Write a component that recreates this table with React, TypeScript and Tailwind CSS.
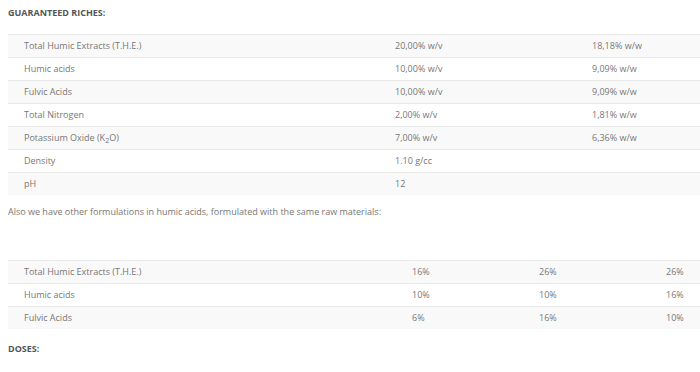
import React from 'react';

// Guaranteed analysis rows
const riches = [
  ['Total Humic Extracts (T.H.E.)', '20,00% w/v', '18,18% w/w'],
  ['Humic acids', '10,00% w/v', '9,09% w/w'],
  ['Fulvic Acids', '10,00% w/v', '9,09% w/w'],
  ['Total Nitrogen', '2,00% w/v', '1,81% w/w'],
  ['K2O', '7,00% w/v', '6,36% w/w'],
  ['Density', '1.10 g/cc', ''],
  ['pH', '12', ''],
];

const formulations = [
  ['Total Humic Extracts (T.H.E.)', '16%', '26%', '26%'],
  ['Humic acids', '10%', '10%', '16%'],
  ['Fulvic Acids', '6%', '16%', '10%'],
];

function Label({ text }: { text: string }) {
  if (text === 'K2O') {
    return (
      <>
        Potassium Oxide (K<sub className="text-[7px]">2</sub>O)
      </>
    );
  }
  return <>{text}</>;
}

export default function App() {
  return (
    <div
      className="bg-white min-h-screen text-[#777] text-[9px] leading-[1.5] pl-2"
      style={{ fontFamily: '"Open Sans", sans-serif' }}
    >
      <p className="pt-[6px] font-bold text-[#555]">GUARANTEED RICHES:</p>

      <table className="mt-[14px] w-[692px] border-collapse table-fixed">
        <colgroup>
          <col className="w-[371px]" />
          <col className="w-[197px]" />
          <col />
        </colgroup>
        <tbody>
          {riches.map((row, i) => (
            <tr
              key={i}
              className={`border-t border-[#e8e8e8] ${i % 2 === 0 ? 'bg-[#f9f9f9]' : 'bg-white'}`}
            >
              <td className="h-[23px] px-4 align-middle">
                <Label text={row[0]} />
              </td>
              <td className="h-[23px] px-4 align-middle">{row[1]}</td>
              <td className="h-[23px] px-4 align-middle">{row[2]}</td>
            </tr>
          ))}
        </tbody>
      </table>

      <p className="mt-[10px]">
        Also we have other formulations in humic acids, formulated with the same raw materials:
      </p>

      <table className="mt-[41px] w-[692px] border-collapse table-fixed">
        <colgroup>
          <col className="w-[388px]" />
          <col className="w-[127px]" />
          <col className="w-[127px]" />
          <col />
        </colgroup>
        <tbody>
          {formulations.map((row, i) => (
            <tr
              key={i}
              className={`border-t border-[#e8e8e8] ${i % 2 === 0 ? 'bg-[#f9f9f9]' : 'bg-white'}`}
            >
              {row.map((cell, j) => (
                <td key={j} className="h-[23px] px-4 align-middle">
                  {cell}
                </td>
              ))}
            </tr>
          ))}
        </tbody>
      </table>

      <p className="mt-[13px] font-bold text-[#555]">DOSES:</p>
    </div>
  );
}
